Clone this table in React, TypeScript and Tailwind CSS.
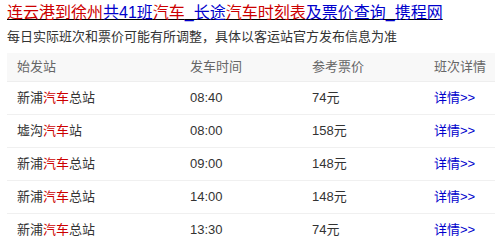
import React from 'react';

const rows = [
  { pre: '新浦', post: '总站', time: '08:40', price: '74元' },
  { pre: '墟沟', post: '站', time: '08:00', price: '158元' },
  { pre: '新浦', post: '总站', time: '09:00', price: '148元' },
  { pre: '新浦', post: '总站', time: '14:00', price: '148元' },
  { pre: '新浦', post: '总站', time: '13:30', price: '74元' },
];

export default function App() {
  return (
    <div
      className="w-[495px] h-[244px] bg-white pl-[7px] overflow-hidden"
      style={{ fontFamily: '"Liberation Sans", "Noto Sans CJK SC", sans-serif' }}
    >
      {/* Title */}
      <div className="text-[16px] leading-[26px] underline">
        <span className="text-[#cc0000]">连云港到徐州</span>
        <span className="text-[#0000cc]">共41班</span>
        <span className="text-[#cc0000]">汽车</span>
        <span className="text-[#0000cc]">_长途</span>
        <span className="text-[#cc0000]">汽车时刻表</span>
        <span className="text-[#0000cc]">及票价查询_携程网</span>
      </div>
      <div className="text-[13px] leading-[22px] text-[#333]">
        每日实际班次和票价可能有所调整，具体以客运站官方发布信息为准
      </div>

      {/* Table */}
      <div className="mt-[5px] w-[488px] text-[13px]">
        <div className="grid grid-cols-[173px_122px_122px_1fr] h-[29px] items-center bg-[#f8f8f8] border-b border-[#eeeeee] text-[#666]">
          <div className="pl-[10px]">始发站</div>
          <div className="pl-[10px]">发车时间</div>
          <div className="pl-[10px]">参考票价</div>
          <div className="pl-[10px]">班次详情</div>
        </div>
        {rows.map((r, i) => (
          <div
            key={i}
            className="grid grid-cols-[173px_122px_122px_1fr] h-[33px] items-center border-b border-[#f0f0f0] text-[#333]"
          >
            <div className="pl-[10px]">
              {r.pre}
              <span className="text-[#cc0000]">汽车</span>
              {r.post}
            </div>
            <div className="pl-[10px]">{r.time}</div>
            <div className="pl-[10px]">{r.price}</div>
            <div className="pl-[10px] text-[#0000cc]">详情&gt;&gt;</div>
          </div>
        ))}
      </div>
    </div>
  );
}
